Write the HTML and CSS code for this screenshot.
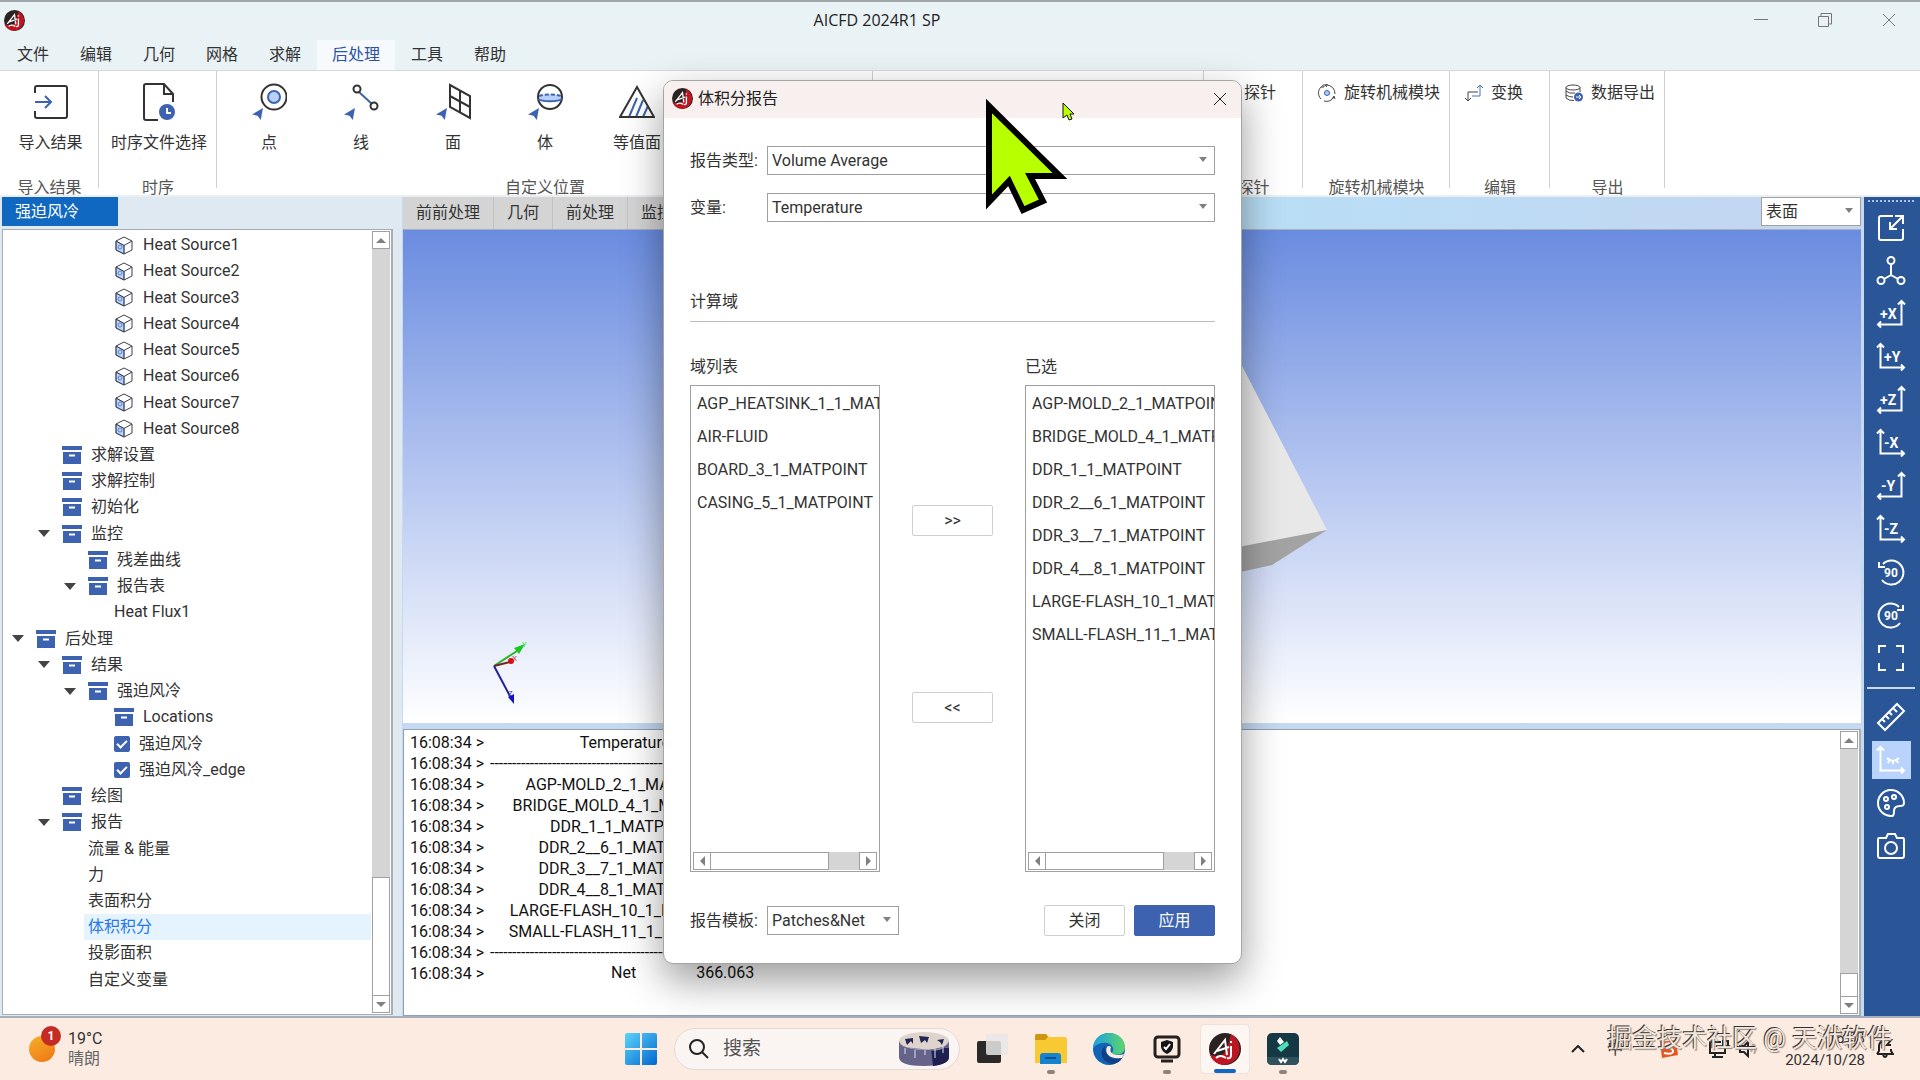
FILE: index.html
```html
<!DOCTYPE html>
<html lang="zh-CN">
<head>
    <meta charset="UTF-8">
    <meta name="viewport" content="width=device-width, initial-scale=1.0">
    <title>AICFD 2024R1 SP</title>
    <link rel="stylesheet" href="styles.css">
</head>
<body>
    <!-- Shared icons -->
    <svg class="sprite" aria-hidden="true">
        <symbol id="logo" viewBox="0 0 32 32">
            <circle cx="16" cy="16" r="16" fill="#2b2221"/>
            <path d="M22 1.5A16 16 0 0 1 10 31C5 29 2 25 1 21C8 26 18 22 19 12Z" fill="#bd1622"/>
            <path d="M5 21L16 7L18 22M8 18L20 14M22 13V22Q22 26 18 25M22 8V10M7 25Q11 21 17 25" fill="none" stroke="#fff" stroke-width="2"/>
        </symbol>
        <symbol id="box" viewBox="0 0 20 18">
            <path d="M0 0H20V4H0ZM1 6H19V18H1Z" fill="#3d62af"/>
            <path d="M7 9.500H13" stroke="#fff" stroke-width="2"/>
        </symbol>
        <symbol id="cube" viewBox="0 0 18 19">
            <path d="M1 5L9 9.500V18L1 14Z" fill="#bdd3f8" stroke="#5d82cf"/>
            <path d="M9 1L17 5V14L9 18L1 14V5ZM17 5L9 9.500L1 5M9 9.500V18" fill="none" stroke="#3c3f45"/>
            <circle cx="5" cy="11" r="2" fill="none" stroke="#5d82cf"/>
        </symbol>
        <symbol id="pick" viewBox="0 0 10 11">
            <path d="M10 0L0 6L5 7L8 11Z" fill="#3d62af"/>
        </symbol>
        <symbol id="axes-l" viewBox="0 0 30 30">
            <path d="M25.500 2V25.500H2M22 5.500L25.500 2L29 5.500M5 22.500L2 25.500L5 28.500" fill="none" stroke="currentColor" stroke-width="2"/>
        </symbol>
        <symbol id="axes-r" viewBox="0 0 30 30">
            <path d="M4.500 2V25.500H28M1 5.500L4.500 2L8 5.500M25 22.500L28 25.500L25 28.500" fill="none" stroke="currentColor" stroke-width="2"/>
        </symbol>
    </svg>

    <div class="app">
        <header class="titlebar">
            <svg class="app-logo"><use href="#logo"/></svg>
            <h1>AICFD 2024R1 SP</h1>
            <div class="window-buttons">
                <button aria-label="最小化"><svg width="14" height="14" viewBox="0 0 14 14"><path d="M0 6.500H14"/></svg></button>
                <button aria-label="还原"><svg width="14" height="14" viewBox="0 0 14 14"><path d="M.5 3.500H10.500V13.500H.5ZM3 3V.5H13.500V11H11"/></svg></button>
                <button aria-label="关闭窗口"><svg width="14" height="14" viewBox="0 0 14 14"><path d="M1 1L13 13M13 1L1 13"/></svg></button>
            </div>
        </header>

        <nav class="menu">
            <a href="#">文件</a>
            <a href="#">编辑</a>
            <a href="#">几何</a>
            <a href="#">网格</a>
            <a href="#">求解</a>
            <a href="#" class="active">后处理</a>
            <a href="#">工具</a>
            <a href="#">帮助</a>
        </nav>

        <div class="ribbon">
            <section class="group g-import">
                <div class="tools">
                    <button class="tool">
                        <svg width="36" height="36" viewBox="0 0 36 36" fill="none" stroke="#333" stroke-width="2"><path d="M2 9V4Q2 2 4 2H32Q34 2 34 4V32Q34 34 32 34H4Q2 34 2 32V27"/><path d="M2 18H18M12 12L18 18L12 24" stroke="#3d62af"/></svg>
                        <span>导入结果</span>
                    </button>
                </div>
                <h2>导入结果</h2>
            </section>
            <section class="group g-time">
                <div class="tools">
                    <button class="tool">
                        <svg width="36" height="38" viewBox="0 0 36 38" fill="none" stroke="#333" stroke-width="2"><path d="M17 37H5Q3 37 3 35V3Q3 1 5 1H23L32 11V19M23 1V11H32"/><circle cx="26" cy="29" r="8" fill="#3d62af" stroke="none"/><path d="M26 25V30H30" stroke="#fff"/></svg>
                        <span>时序文件选择</span>
                    </button>
                </div>
                <h2>时序</h2>
            </section>
            <section class="group g-place">
                <div class="tools">
                    <button class="tool">
                        <svg width="36" height="36" viewBox="0 0 36 36" fill="none"><circle cx="23" cy="13" r="12.500" stroke="#333" stroke-width="2"/><circle cx="23" cy="13" r="6" fill="#b9d1fa" stroke="#3d62af" stroke-width="2"/><use href="#pick" x="1" y="24" width="11" height="12"/></svg>
                        <span>点</span>
                    </button>
                    <button class="tool">
                        <svg width="36" height="36" viewBox="0 0 36 36" fill="none"><path d="M16 8L29 20" stroke="#3d62af" stroke-width="2"/><circle cx="14" cy="5" r="3.500" stroke="#333" stroke-width="2"/><circle cx="31" cy="22" r="3.500" stroke="#333" stroke-width="2"/><use href="#pick" x="1" y="24" width="11" height="12"/></svg>
                        <span>线</span>
                    </button>
                    <button class="tool">
                        <svg width="36" height="36" viewBox="0 0 36 36" fill="none"><path d="M15 1L35 12V34L15 23ZM25 6V28M15 12L35 23" stroke="#333" stroke-width="2"/><use href="#pick" x="1" y="24" width="11" height="12"/></svg>
                        <span>面</span>
                    </button>
                    <button class="tool">
                        <svg width="36" height="36" viewBox="0 0 36 36" fill="none"><path d="M11 13C15 9 31 9 35 13V15C31 18 15 18 11 15Z" fill="#b9d1fa"/><circle cx="23" cy="13" r="12" stroke="#333" stroke-width="2"/><path d="M11 15C15 18 31 18 35 15" stroke="#3d62af" stroke-width="2"/><path d="M12 12C17 10 29 10 34 12" stroke="#3d62af" stroke-width="2" stroke-dasharray="4 2"/><use href="#pick" x="1" y="24" width="11" height="12"/></svg>
                        <span>体</span>
                    </button>
                    <button class="tool">
                        <svg width="36" height="36" viewBox="0 0 36 36" fill="none"><path d="M10 33L18 14M17 33L24 16M24 33L29 22" stroke="#3d62af" stroke-width="2"/><path d="M18 3L35 33H1Z" stroke="#333" stroke-width="2"/></svg>
                        <span>等值面</span>
                    </button>
                </div>
                <h2>自定义位置</h2>
            </section>
            <section class="group g-hidden"></section>
            <section class="group g-probe">
                <div class="tools"><button class="tool-row"><svg width="18" height="18"></svg><span>探针</span></button></div>
                <h2>探针</h2>
            </section>
            <section class="group g-rotate">
                <div class="tools">
                    <button class="tool-row">
                        <svg width="18" height="18" viewBox="0 0 18 18" fill="none" stroke="#444"><path d="M5 1.500A8.500 8.500 0 0 0 3 15M6 17A8.500 8.500 0 0 0 16 13M17 10A8.500 8.500 0 0 0 8 1M6 0V3H3M14 15L16 12L17 15M10 0L7 1L9 3"/><circle cx="9" cy="9" r="2.500" fill="#a9ccfa" stroke="#3d62af"/></svg>
                        <span>旋转机械模块</span>
                    </button>
                </div>
                <h2>旋转机械模块</h2>
            </section>
            <section class="group g-edit">
                <div class="tools">
                    <button class="tool-row">
                        <svg width="18" height="18" viewBox="0 0 18 18" fill="none"><path d="M13 8H3V17M0 14L3 17L6 14" stroke="#444"/><path d="M7 12H15V1M12 4L15 1L18 4" stroke="#4a70c0"/></svg>
                        <span>变换</span>
                    </button>
                </div>
                <h2>编辑</h2>
            </section>
            <section class="group g-export">
                <div class="tools">
                    <button class="tool-row">
                        <svg width="18" height="18" viewBox="0 0 18 18" fill="none" stroke="#444"><ellipse cx="8" cy="3.500" rx="7" ry="2.500"/><path d="M1 3.500V14Q4 17 9 16.500M15 3.500V8M1 7Q4 10 10 9M1 11Q4 13 8 13"/><circle cx="13.500" cy="13" r="4.500" fill="#3d62af" stroke="none"/><path d="M11 13H16M14 11L16 13L14 15" stroke="#fff"/></svg>
                        <span>数据导出</span>
                    </button>
                </div>
                <h2>导出</h2>
            </section>
        </div>

        <main class="workspace">
            <aside class="explorer">
                <button class="project-tab">强迫风冷</button>
                <div class="tree-box">
                    <ul class="tree">
                        <li class="l3"><i></i><svg class="ic-cube"><use href="#cube"/></svg><span>Heat Source1</span></li>
                        <li class="l3"><i></i><svg class="ic-cube"><use href="#cube"/></svg><span>Heat Source2</span></li>
                        <li class="l3"><i></i><svg class="ic-cube"><use href="#cube"/></svg><span>Heat Source3</span></li>
                        <li class="l3"><i></i><svg class="ic-cube"><use href="#cube"/></svg><span>Heat Source4</span></li>
                        <li class="l3"><i></i><svg class="ic-cube"><use href="#cube"/></svg><span>Heat Source5</span></li>
                        <li class="l3"><i></i><svg class="ic-cube"><use href="#cube"/></svg><span>Heat Source6</span></li>
                        <li class="l3"><i></i><svg class="ic-cube"><use href="#cube"/></svg><span>Heat Source7</span></li>
                        <li class="l3"><i></i><svg class="ic-cube"><use href="#cube"/></svg><span>Heat Source8</span></li>
                        <li class="l1"><i></i><svg class="ic-box"><use href="#box"/></svg><span>求解设置</span></li>
                        <li class="l1"><i></i><svg class="ic-box"><use href="#box"/></svg><span>求解控制</span></li>
                        <li class="l1"><i></i><svg class="ic-box"><use href="#box"/></svg><span>初始化</span></li>
                        <li class="l1"><i class="open"></i><svg class="ic-box"><use href="#box"/></svg><span>监控</span></li>
                        <li class="l2"><i></i><svg class="ic-box"><use href="#box"/></svg><span>残差曲线</span></li>
                        <li class="l2"><i class="open"></i><svg class="ic-box"><use href="#box"/></svg><span>报告表</span></li>
                        <li class="l3"><i></i><span class="leaf">Heat Flux1</span></li>
                        <li class="l0"><i class="open"></i><svg class="ic-box"><use href="#box"/></svg><span>后处理</span></li>
                        <li class="l1"><i class="open"></i><svg class="ic-box"><use href="#box"/></svg><span>结果</span></li>
                        <li class="l2"><i class="open"></i><svg class="ic-box"><use href="#box"/></svg><span>强迫风冷</span></li>
                        <li class="l3"><i></i><svg class="ic-box"><use href="#box"/></svg><span>Locations</span></li>
                        <li class="l3"><i></i><input type="checkbox" id="show-body" checked><label for="show-body">强迫风冷</label></li>
                        <li class="l3"><i></i><input type="checkbox" id="show-edge" checked><label for="show-edge">强迫风冷_edge</label></li>
                        <li class="l1"><i></i><svg class="ic-box"><use href="#box"/></svg><span>绘图</span></li>
                        <li class="l1"><i class="open"></i><svg class="ic-box"><use href="#box"/></svg><span>报告</span></li>
                        <li class="l2"><i></i><span class="leaf">流量 &amp; 能量</span></li>
                        <li class="l2"><i></i><span class="leaf">力</span></li>
                        <li class="l2"><i></i><span class="leaf">表面积分</span></li>
                        <li class="l2"><i></i><span class="leaf selected">体积积分</span></li>
                        <li class="l2"><i></i><span class="leaf">投影面积</span></li>
                        <li class="l2"><i></i><span class="leaf">自定义变量</span></li>
                    </ul>
                    <div class="vscroll">
                        <button class="arrow up" aria-label="向上滚动"></button>
                        <div class="track"></div>
                        <div class="thumb tree-thumb"></div>
                        <button class="arrow down" aria-label="向下滚动"></button>
                    </div>
                </div>
            </aside>

            <div class="center">
                <div class="view-tabs">
                    <button>前前处理</button>
                    <button>几何</button>
                    <button>前处理</button>
                    <button>监控</button>
                    <div class="drop view-mode">
                        <select aria-label="显示方式"><option>表面</option></select>
                    </div>
                </div>
                <div class="viewport">
                    <svg class="model" width="300" height="300" viewBox="0 0 300 300">
                        <path d="M0 0L106 92L194 262L106 300H0Z" fill="#e8e8e8"/>
                        <path d="M194 262L139 297L80 310V284Z" fill="#a3a3a3"/>
                    </svg>
                    <svg class="triad" width="44" height="70" viewBox="0 0 44 70" fill="none">
                        <path d="M4 28L30 11" stroke="#28b52c" stroke-width="2"/><path d="M35 6L24 10L29 16Z" fill="#19c81e"/>
                        <path d="M4 28L20 24" stroke="#7b2020" stroke-width="2"/><circle cx="21" cy="23" r="3" fill="#d40f14"/>
                        <path d="M4 28L21 60" stroke="#22229c" stroke-width="2"/><path d="M24 66L18 59L24 56Z" fill="#1111c8"/>
                        <text x="32" y="9" fill="#40dc40">Y</text><text x="22" y="23" fill="#c54050">X</text><text x="18" y="58" fill="#4a4aa0">Z</text>
                    </svg>
                </div>
                <div class="log-box">
                    <table class="log">
                        <tr><th>16:08:34 &gt;</th><td>Temperature</td></tr>
                        <tr><th>16:08:34 &gt;</th><td class="rule">-------------------------------------------</td></tr>
                        <tr><th>16:08:34 &gt;</th><td>AGP-MOLD_2_1_MATPOINT</td></tr>
                        <tr><th>16:08:34 &gt;</th><td>BRIDGE_MOLD_4_1_MATPOINT</td></tr>
                        <tr><th>16:08:34 &gt;</th><td>DDR_1_1_MATPOINT</td></tr>
                        <tr><th>16:08:34 &gt;</th><td>DDR_2__6_1_MATPOINT</td></tr>
                        <tr><th>16:08:34 &gt;</th><td>DDR_3__7_1_MATPOINT</td></tr>
                        <tr><th>16:08:34 &gt;</th><td>DDR_4__8_1_MATPOINT</td></tr>
                        <tr><th>16:08:34 &gt;</th><td>LARGE-FLASH_10_1_MATPOINT</td></tr>
                        <tr><th>16:08:34 &gt;</th><td>SMALL-FLASH_11_1_MATPOINT</td></tr>
                        <tr><th>16:08:34 &gt;</th><td class="rule">-------------------------------------------</td></tr>
                        <tr><th>16:08:34 &gt;</th><td class="total"><span>Net</span><span>366.063</span></td></tr>
                    </table>
                    <div class="vscroll">
                        <button class="arrow up" aria-label="日志向上"></button>
                        <div class="track"></div>
                        <div class="thumb log-thumb"></div>
                        <button class="arrow down" aria-label="日志向下"></button>
                    </div>
                </div>
            </div>

            <aside class="view-tools">
                <div class="grip"></div>
                <button aria-label="适应窗口"><svg viewBox="0 0 30 30"><path d="M17 3H5Q3 3 3 5V25Q3 27 5 27H25Q27 27 27 25V16M14 16L27 3M19 3H27V11M14 9V16H21"/></svg></button>
                <button aria-label="等轴测"><svg viewBox="0 0 30 30"><circle cx="15" cy="4.500" r="3.500"/><circle cx="5" cy="24.500" r="3.500"/><circle cx="25" cy="24.500" r="3.500"/><path d="M15 8V19L8 23M15 19L22 23"/></svg></button>
                <button aria-label="+X"><svg viewBox="0 0 30 30"><use href="#axes-l"/><text x="4" y="20">+X</text></svg></button>
                <button aria-label="+Y"><svg viewBox="0 0 30 30"><use href="#axes-r"/><text x="8" y="20">+Y</text></svg></button>
                <button aria-label="+Z"><svg viewBox="0 0 30 30"><use href="#axes-l"/><text x="4" y="20">+Z</text></svg></button>
                <button aria-label="-X"><svg viewBox="0 0 30 30"><use href="#axes-r"/><text x="8" y="20">-X</text></svg></button>
                <button aria-label="-Y"><svg viewBox="0 0 30 30"><use href="#axes-l"/><text x="5" y="20">-Y</text></svg></button>
                <button aria-label="-Z"><svg viewBox="0 0 30 30"><use href="#axes-r"/><text x="8" y="20">-Z</text></svg></button>
                <button aria-label="逆时针旋转90度"><svg viewBox="0 0 30 30"><path d="M7 7A12 12 0 1 1 6 23M3 5V10H9"/><text class="deg" x="8" y="20">90</text></svg></button>
                <button aria-label="顺时针旋转90度"><svg viewBox="0 0 30 30"><path d="M23 7A12 12 0 1 0 24 23M27 5V10H21"/><text class="deg" x="8" y="20">90</text></svg></button>
                <button aria-label="全屏"><svg viewBox="0 0 30 30"><path d="M3 10V3H10M20 3H27V10M27 20V27H20M10 27H3V20"/></svg></button>
                <hr>
                <button aria-label="测量"><svg viewBox="0 0 30 30"><path d="M2 21L21 2L28 9L9 28ZM6 17L9 20M9 13L13 17M13 10L16 13M17 6L21 10"/></svg></button>
                <button aria-label="隐藏坐标轴" class="on"><svg viewBox="0 0 30 30"><use href="#axes-r"/><path d="M11 13Q17 19 23 13M12 18L13 16M17 19V16M22 18L21 16"/></svg></button>
                <button aria-label="颜色"><svg viewBox="0 0 30 30"><path d="M16 28A13 13 0 1 1 28 15Q28 18 24 18Q18 18 18 23Q18 28 16 28Z"/><circle cx="10" cy="11" r="2"/><circle cx="18" cy="9" r="2"/><circle cx="11" cy="19" r="2"/></svg></button>
                <button aria-label="截图"><svg viewBox="0 0 30 30"><path d="M3 7H10L12 3H19L21 7H27Q28 7 28 9V25Q28 27 26 27H4Q2 27 2 25V9Q2 7 3 7Z"/><circle cx="15" cy="17" r="6"/></svg></button>
            </aside>
        </main>

        <footer class="taskbar">
            <a href="#" class="weather">
                <span class="sun"><b>1</b></span>
                <span class="weather-text"><span>19°C</span><span>晴朗</span></span>
            </a>
            <div class="dock">
                <button aria-label="开始"><svg width="32" height="32" viewBox="0 0 32 32"><defs><linearGradient id="win" x2="1" y2="1"><stop stop-color="#5fd3fb"/><stop offset="1" stop-color="#0067cf"/></linearGradient></defs><path d="M2 0H15V15H0V2Q0 0 2 0ZM17 0H30Q32 0 32 2V15H17ZM0 17H15V32H2Q0 32 0 30ZM17 17H32V30Q32 32 30 32H17Z" fill="url(#win)"/></svg></button>
                <label class="search">
                    <svg width="20" height="20" viewBox="0 0 20 20"><circle cx="8" cy="8" r="7" fill="none" stroke="#222" stroke-width="2"/><path d="M13 13L19 19" stroke="#222" stroke-width="2"/></svg>
                    <input type="text" placeholder="搜索" aria-label="搜索">
                    <svg width="50" height="34" viewBox="0 0 50 34"><path d="M0 9V25Q0 34 25 34Q50 34 50 25V9Z" fill="#66638a"/><path d="M32 16H50V25Q50 32 34 34Z" fill="#1d2050"/><ellipse cx="25" cy="9" rx="25" ry="9" fill="#ded4cc"/><path d="M0 9A25 9 0 0 0 50 9L46 14Q42 20 30 18T4 15Z" fill="#8d86a5"/><path d="M6 7L14 6V12L12 9L8 13ZM20 4L30 5L28 11L26 8L22 11ZM38 8L45 7L43 13L41 10Z" fill="#222552"/><path d="M6 16V22M16 18V26M26 18V23M36 17V26M44 14V21" stroke="#d9e2f7"/></svg>
                </label>
                <button aria-label="任务视图"><svg width="32" height="32" viewBox="0 0 32 32"><rect y="8" width="24" height="22" rx="2" fill="#2c2a29"/><rect x="9" y="1" width="22" height="21" rx="2" fill="#e8e8e8" opacity=".85"/></svg></button>
                <button aria-label="文件资源管理器" class="running"><svg width="32" height="32" viewBox="0 0 32 32"><path d="M0 3Q0 1 2 1H11L14 4H30Q32 4 32 6V30H0Z" fill="#f8c932"/><path d="M0 3Q0 1 2 1H11L13 4L10 7H0Z" fill="#cf9413"/><path d="M5 31V23Q5 20 8 20H23Q26 20 26 23V31Z" fill="#1683ce"/><path d="M10 25H21" stroke="#0b4f91" stroke-width="2"/></svg></button>
                <button aria-label="Edge"><svg width="32" height="32" viewBox="0 0 32 32"><defs><linearGradient id="edge" x2="1"><stop stop-color="#1c9fe4"/><stop offset="1" stop-color="#5cd669"/></linearGradient></defs><circle cx="16" cy="16" r="16" fill="#1262b5"/><path d="M0 15C1 5 8 0 16 0C26 0 32 7 32 14C32 20 27 23 20 21C17 20 21 19 20 15C18 8 6 8 0 15Z" fill="url(#edge)"/><path d="M14 14C11 20 17 27 29 25L31 21Q26 23 20 21Q16 19 18 14Q16 12 14 14Z" fill="#fbebe0"/><path d="M12 13C6 18 8 29 19 31Q27 30 29 25C18 29 11 21 12 13Z" fill="#103f85"/></svg></button>
                <button aria-label="安全中心" class="running"><svg width="28" height="28" viewBox="0 0 28 28"><rect x="2" y="2" width="24" height="20" rx="3" fill="none" stroke="#24211f" stroke-width="3"/><path d="M14 5L20 7V12Q19 17 14 19Q9 17 8 12V7Z" fill="#161514"/><path d="M11 12L13 14L17 9" fill="none" stroke="#fff" stroke-width="2"/><path d="M8 26H20" stroke="#24211f" stroke-width="3"/></svg></button>
                <button aria-label="AICFD" class="current"><svg width="32" height="32"><use href="#logo"/></svg></button>
                <button aria-label="Filmora" class="running"><svg width="32" height="32" viewBox="0 0 32 32"><rect width="32" height="32" rx="5" fill="#163844"/><path d="M0 24H32V27Q32 32 27 32H5Q0 32 0 27Z" fill="#2f505d"/><path d="M13 4L17 9L13 12L10 8Z" fill="#fff"/><path d="M20 8L22 12L14 19L10 15Z" fill="#4ce0ba"/><path d="M12 26L14 29L16 26L18 29L20 26" fill="none" stroke="#fff" stroke-width="2"/></svg></button>
            </div>
            <div class="tray">
                <svg width="14" height="8" viewBox="0 0 14 8"><path d="M1 7L7 1L13 7"/></svg>
                <span class="ime">中</span>
                <svg width="20" height="20" viewBox="0 0 20 20"><path d="M1 3L17 1L19 16L3 19Z" fill="#e8551f" stroke="none"/><path d="M15 5Q5 3 6 8Q15 9 14 13Q12 16 5 14" stroke="#fff"/></svg>
                <svg class="net" width="20" height="20" viewBox="0 0 20 20"><path d="M12 14H1V3H12M6 14V18M3 18H14M14 2H19V8H14ZM16 8V14H10"/></svg>
                <svg width="20" height="18" viewBox="0 0 20 18"><path d="M1 6H5L9 2V16L5 12H1Z"/><path d="M12 6Q14 9 12 12M15 4Q18 9 15 14" stroke="#b5aca6"/></svg>
                <time><span>16:08</span><span>2024/10/28</span></time>
                <svg width="18" height="20" viewBox="0 0 18 20"><path d="M1 15L3 12V7Q3 2 9 2M15 10V12L17 15H1M7 16Q9 20 11 16M11 1H15L11 6H15"/></svg>
                <div class="watermark">掘金技术社区 @ 天洑软件</div>
            </div>
        </footer>
    </div>

    <div class="dialog" role="dialog" aria-labelledby="dialog-title">
        <div class="dialog-head">
            <svg class="app-logo"><use href="#logo"/></svg>
            <h2 id="dialog-title">体积分报告</h2>
            <button aria-label="关闭对话框"><svg width="12" height="12" viewBox="0 0 12 12"><path d="M0 0L12 12M12 0L0 12" stroke="#222" fill="none"/></svg></button>
        </div>
        <form class="dialog-body">
            <div class="field">
                <label for="report-type">报告类型:</label>
                <div class="drop"><select id="report-type"><option>Volume Average</option></select></div>
            </div>
            <div class="field">
                <label for="variable">变量:</label>
                <div class="drop"><select id="variable"><option>Temperature</option></select></div>
            </div>
            <h3>计算域</h3>
            <div class="domains">
                <div class="domain">
                    <h4>域列表</h4>
                    <div class="list-box">
                        <ul>
                            <li>AGP_HEATSINK_1_1_MATPOINT</li>
                            <li>AIR-FLUID</li>
                            <li>BOARD_3_1_MATPOINT</li>
                            <li>CASING_5_1_MATPOINT</li>
                        </ul>
                        <div class="hscroll">
                            <button type="button" class="arrow left" aria-label="向左"></button>
                            <div class="thumb"></div>
                            <div class="track"></div>
                            <button type="button" class="arrow right" aria-label="向右"></button>
                        </div>
                    </div>
                </div>
                <div class="movers">
                    <button type="button" class="btn">&gt;&gt;</button>
                    <button type="button" class="btn">&lt;&lt;</button>
                </div>
                <div class="domain">
                    <h4>已选</h4>
                    <div class="list-box">
                        <ul>
                            <li>AGP-MOLD_2_1_MATPOINT</li>
                            <li>BRIDGE_MOLD_4_1_MATPOINT</li>
                            <li>DDR_1_1_MATPOINT</li>
                            <li>DDR_2__6_1_MATPOINT</li>
                            <li>DDR_3__7_1_MATPOINT</li>
                            <li>DDR_4__8_1_MATPOINT</li>
                            <li>LARGE-FLASH_10_1_MATPOINT</li>
                            <li>SMALL-FLASH_11_1_MATPOINT</li>
                        </ul>
                        <div class="hscroll">
                            <button type="button" class="arrow left" aria-label="向左"></button>
                            <div class="thumb"></div>
                            <div class="track"></div>
                            <button type="button" class="arrow right" aria-label="向右"></button>
                        </div>
                    </div>
                </div>
            </div>
            <div class="actions">
                <label for="template">报告模板:</label>
                <div class="drop template"><select id="template"><option>Patches&amp;Net</option></select></div>
                <button type="button" class="btn">关闭</button>
                <button type="submit" class="btn primary">应用</button>
            </div>
        </form>
    </div>

    <!-- Pointers -->
    <svg class="pointer-big" width="84" height="120" viewBox="0 0 84 120"><path d="M5 10V106L25 85L39 114L59 105L46 80H76Z" fill="#b8ff00" stroke="#000" stroke-width="6"/></svg>
    <svg class="pointer" width="14" height="20" viewBox="0 0 14 20"><path d="M1 1V16L5 13L7 18L10 17L8 12H12Z" fill="#b8ff00" stroke="#111"/></svg>
</body>
</html>
```
FILE: styles.css
```css
* {
    margin: 0;
    padding: 0;
    box-sizing: border-box;
}

body {
    font-family: Roboto, "Noto Sans CJK SC", sans-serif;
    font-size: 16px;
    line-height: 20px;
    color: #333;
    overflow: hidden;
}

h1, h2, h3, h4, th {
    font-size: 16px;
    font-weight: 400;
}

button, input, select {
    font: inherit;
    color: inherit;
    background: none;
    border: none;
    border-radius: 0;
}

a {
    color: inherit;
    text-decoration: none;
}

ul {
    list-style: none;
}

.sprite {
    position: absolute;
    width: 0;
    height: 0;
}

.app {
    display: flex;
    flex-direction: column;
    height: 100vh;
    background: #e9f2f5;
}

.app-logo {
    width: 21px;
    height: 21px;
}

/* Title bar and menu */
.titlebar {
    display: grid;
    grid-template-columns: 1fr auto 1fr;
    align-items: center;
    height: 40px;
    padding: 0 4px 2px;
    border-top: 2px solid #a0a5a9;
}

.titlebar h1 {
    font-family: "Open Sans", sans-serif;
    margin-right: 166px;
    color: #222;
}

.window-buttons {
    display: flex;
    justify-content: flex-end;
    gap: 50px;
    padding-right: 20px;
}

.window-buttons button {
    display: flex;
}

.window-buttons path {
    fill: none;
    stroke: #777;
}

.menu {
    display: flex;
    gap: 1px;
    height: 30px;
    padding-left: 2px;
}

.menu a {
    padding: 0 15px;
    line-height: 30px;
}

.menu .active {
    background: #f6fafc;
    color: #2d52a8;
}

/* Ribbon */
.ribbon {
    display: flex;
    height: 127px;
    background: #fff;
    border-top: 1px solid #d3dbe0;
    border-bottom: 2px solid #eceff1;
}

.group {
    display: flex;
    flex-direction: column;
    align-items: center;
    justify-content: space-between;
    background: linear-gradient(#d0d0d0, #d0d0d0) right top / 1px 117px no-repeat;
}

.group h2 {
    color: #555;
    height: 17px;
    white-space: nowrap;
}

.g-import { width: 99px; }
.g-time { width: 118px; }
.g-place { width: 656px; }
.g-hidden { width: 331px; }
.g-probe { width: 99px; }
.g-rotate { width: 147px; }
.g-edit { width: 100px; }
.g-export { width: 115px; }

.tools {
    display: flex;
    align-self: stretch;
    padding: 12px 0 0 15px;
}

.g-import .tools, .g-time .tools {
    justify-content: center;
    padding-left: 2px;
}

.g-place .tools {
    padding-left: 6px;
}

.tool {
    display: flex;
    flex-direction: column;
    align-items: center;
    gap: 12px;
    width: 92px;
    white-space: nowrap;
}

.tool svg {
    height: 38px;
}

.g-time .tool {
    width: 112px;
}

.tool-row {
    display: flex;
    align-items: center;
    gap: 8px;
    white-space: nowrap;
}

.g-probe .tool-row {
    gap: 7px;
}

/* Project tree */
.workspace {
    display: flex;
    flex: 1;
    min-height: 0;
    border-bottom: 2px solid #a9aebb;
}

.explorer {
    display: flex;
    flex-direction: column;
    width: 402px;
    padding: 0 9px 1px 2px;
    background: #dfe9f1;
}

.project-tab {
    align-self: flex-start;
    width: 116px;
    height: 29px;
    padding-left: 13px;
    text-align: left;
    background: #1068c0;
    color: #fff;
}

.tree-box {
    display: flex;
    flex: 1;
    min-height: 0;
    margin-top: 3px;
    background: #fff;
    border: 1px solid #a8adb2;
    border-right: 2px solid #a8adb2;
}

.tree {
    display: flex;
    flex: 1;
    flex-direction: column;
    padding: 2px 0 21px;
}

.tree li {
    display: flex;
    flex: 1;
    align-items: center;
}

.tree i {
    width: 15px;
    margin-right: 11px;
}

.tree .open::before {
    content: '';
    display: block;
    width: 0;
    margin: 0 auto;
    border: 6px solid transparent;
    border-top: 7px solid #444;
    border-bottom: 0;
}

.l0 { padding-left: 7px; }
.l1 { padding-left: 33px; }
.l2 { padding-left: 59px; }
.l3 { padding-left: 85px; }

.ic-box {
    width: 20px;
    height: 18px;
    margin-right: 9px;
}

.ic-cube {
    width: 18px;
    height: 19px;
    margin: 0 10px 0 1px;
}

.tree .leaf {
    flex: 1;
    align-self: stretch;
    display: flex;
    align-items: center;
    margin-left: -4px;
    padding-left: 4px;
}

.tree .selected {
    background: #e5f3fe;
    color: #2878e8;
}

.tree input {
    appearance: none;
    width: 16px;
    height: 16px;
    margin-right: 9px;
    border-radius: 2px;
    background: #3d62af;
}

.tree input:checked::before {
    content: '';
    display: block;
    width: 8px;
    height: 4px;
    margin: 4px 0 0 3px;
    border: solid #fff;
    border-width: 0 0 2px 2px;
    transform: rotate(-45deg);
}

/* Scroll bars */
.vscroll {
    display: flex;
    flex-direction: column;
    width: 18px;
    margin: 1px;
}

.hscroll {
    display: flex;
    height: 18px;
    margin: 0 2px 1px;
}

.track {
    flex: 1;
    background: #d5d5d5;
}

.thumb, .arrow {
    background: #fff;
    border: 1px solid #a0a0a0;
}

.arrow {
    display: flex;
    align-items: center;
    justify-content: center;
    width: 18px;
    height: 18px;
}

.arrow::before {
    content: '';
    border: 5px solid transparent;
}

.up::before { border-bottom: 5px solid #808080; border-top: 0; }
.down::before { border-top: 5px solid #808080; border-bottom: 0; }
.left::before { border-right: 5px solid #808080; border-left: 0; }
.right::before { border-left: 5px solid #808080; border-right: 0; }

.tree-thumb {
    height: 118px;
    border-bottom: 0;
}

.log-thumb {
    height: 23px;
    border-bottom: 0;
}

/* Drop-downs */
.drop {
    position: relative;
    flex: 1;
}

.drop select {
    appearance: none;
    display: block;
    width: 100%;
    height: 29px;
    padding: 0 4px;
    background: #fff;
    border: 1px solid #a0a0a0;
}

.drop::after {
    content: '';
    position: absolute;
    right: 8px;
    top: 11px;
    border: 4px solid transparent;
    border-top: 5px solid #808080;
    border-bottom: 0;
    pointer-events: none;
}

/* 3D view and log */
.center {
    display: flex;
    flex: 1;
    flex-direction: column;
    min-width: 0;
    padding: 0 3px 0 1px;
    background: #c5d9f0;
}

.view-tabs {
    display: flex;
    height: 33px;
    border-bottom: 1px solid #a8b0bd;
    background: linear-gradient(90deg, #b5dff3 50%, #bcdcf6 70%, #c4d5ef);
}

.view-tabs button {
    padding: 0 13px;
    background: #d4d4d4;
    border-right: 1px solid #c2c2c2;
}

.view-tabs .view-mode {
    flex: none;
    width: 100px;
    margin-left: auto;
}

.viewport {
    position: relative;
    flex: 1;
    background: linear-gradient(#6a8ce0, #fff);
}

.model {
    position: absolute;
    left: 730px;
    top: 38px;
    overflow: visible;
}

.triad {
    position: absolute;
    left: 87px;
    top: 408px;
    font-size: 8px;
}

.log-box {
    display: flex;
    justify-content: space-between;
    height: 287px;
    margin-top: 6px;
    background: #fff;
    border: 1px solid #8fa0b8;
    border-right: 2px solid #a8adb8;
}

.log {
    display: block;
    padding: 2px 6px;
    border-spacing: 0;
    color: #111;
}

.log tr {
    height: 21px;
}

.log th {
    min-width: 80px;
    text-align: left;
    white-space: nowrap;
}

.log td {
    min-width: 270px;
    padding: 0;
    text-align: center;
    white-space: nowrap;
}

.log .rule {
    text-align: left;
}

.log .total {
    display: flex;
    gap: 60px;
    padding-left: 121px;
}

/* View tools */
.view-tools {
    display: flex;
    flex-direction: column;
    align-items: center;
    width: 56px;
    padding-right: 2px;
    background: #2a5697;
    color: #fff;
}

.grip {
    width: 46px;
    margin: 3px 0 7px;
    border-top: 2px dotted #a9c0e2;
}

.view-tools button {
    width: 39px;
    height: 38px;
    margin-bottom: 5px;
}

.view-tools svg {
    display: block;
    width: 30px;
    height: 30px;
    margin: 0 auto;
    fill: none;
    stroke: #fff;
    stroke-width: 2;
}

.view-tools text {
    fill: #fff;
    stroke: none;
    font: 700 14px Roboto, sans-serif;
}

.view-tools .deg {
    font-size: 12px;
}

.view-tools .on {
    background: #b9d3fc;
}

.view-tools hr {
    width: 48px;
    margin: 5px 0 9px;
    border: none;
    border-top: 2px solid #c8daf2;
}

/* Taskbar */
.taskbar {
    display: grid;
    grid-template-columns: 1fr auto 1fr;
    height: 62px;
    background: #fbebe1;
}

.weather {
    display: flex;
    align-items: center;
    gap: 13px;
    padding-left: 29px;
}

.sun {
    position: relative;
    width: 26px;
    height: 26px;
    border-radius: 50%;
    background: linear-gradient(150deg, #f6b02a, #ef7513);
}

.sun b {
    position: absolute;
    left: 12px;
    top: -10px;
    width: 20px;
    height: 20px;
    border-radius: 50%;
    background: #c42b22;
    color: #fff;
    font-size: 12px;
    text-align: center;
}

.weather-text {
    display: flex;
    flex-direction: column;
    color: #333;
}

.weather-text span + span {
    color: #666;
}

.dock {
    display: flex;
    align-items: center;
    gap: 8px;
    padding-left: 4px;
}

.dock button {
    position: relative;
    display: flex;
    align-items: center;
    justify-content: center;
    width: 50px;
    height: 50px;
}

.dock .current {
    background: #fdf6f2;
    border: 1px solid #f0e2da;
    border-radius: 5px;
}

.running::after, .current::after {
    content: '';
    position: absolute;
    bottom: 0;
    left: 50%;
    width: 8px;
    height: 4px;
    margin-left: -4px;
    border-radius: 2px;
    background: #8d837d;
}

.current::after {
    width: 22px;
    margin-left: -11px;
    background: #1068c4;
}

.search {
    display: flex;
    align-items: center;
    gap: 14px;
    width: 286px;
    height: 42px;
    padding: 0 10px 0 14px;
    border: 1px solid #e6dad4;
    border-radius: 21px;
    background: #faf5f2;
}

.search input {
    flex: 1;
    min-width: 0;
    font-size: 19px;
    line-height: 24px;
}

.search input::placeholder {
    color: #555;
}

.tray {
    position: relative;
    display: flex;
    align-items: center;
    justify-content: flex-end;
    gap: 10px;
    padding-right: 26px;
}

.tray > svg {
    fill: none;
    stroke: #222;
    stroke-width: 2;
}

.tray > svg:first-child {
    margin-right: 12px;
}

.ime {
    margin-right: 26px;
}

.net {
    margin-left: 20px;
}

.tray time {
    display: flex;
    flex-direction: column;
    text-align: right;
    margin: 0 1px 0 16px;
    line-height: 22px;
    font-size: 15px;
}

.watermark {
    position: absolute;
    right: 28px;
    top: 5px;
    font-size: 25px;
    line-height: 32px;
    white-space: nowrap;
    color: #f3e6dd;
    text-shadow: -1px -1px 0 #333, 1px 1px 1px #8a807a;
}

/* Report dialog */
.dialog {
    position: absolute;
    left: 663px;
    top: 80px;
    width: 579px;
    background: #fff;
    border: 1px solid #a5a5a5;
    border-radius: 10px;
    box-shadow: 0 16px 40px rgba(0, 0, 0, 0.4);
    overflow: hidden;
}

.dialog-head {
    display: flex;
    align-items: center;
    height: 37px;
    padding: 0 15px 2px 8px;
    background: #f7f0ee;
    color: #222;
}

.dialog-head h2 {
    flex: 1;
    padding-left: 5px;
}

.dialog-head button {
    display: flex;
}

.dialog-body {
    padding: 28px 26px 27px;
}

.field {
    display: flex;
    align-items: center;
    margin-bottom: 18px;
}

.field label, .actions label {
    width: 77px;
}

.dialog h3 {
    margin-top: 70px;
    padding-bottom: 9px;
    border-bottom: 1px solid #bdbdbd;
}

.domains {
    display: flex;
    justify-content: space-between;
    margin: 35px 0 33px;
}

.domain {
    width: 190px;
}

.domain h4 {
    margin-bottom: 8px;
}

.list-box {
    display: flex;
    flex-direction: column;
    height: 487px;
    border: 1px solid #a0a0a0;
}

.list-box ul {
    flex: 1;
    padding: 1px 0 0 6px;
    overflow: hidden;
    white-space: nowrap;
}

.list-box li {
    line-height: 33px;
}

.hscroll .thumb {
    width: 118px;
    border-left: 0;
}

.movers {
    display: flex;
    flex-direction: column;
    gap: 156px;
    padding-top: 148px;
}

.btn {
    width: 81px;
    height: 31px;
    background: #fff;
    border: 1px solid #cfcfcf;
    border-radius: 2px;
}

.primary {
    background: #3d62b0;
    border-color: #3d62b0;
    color: #fff;
}

.actions {
    display: flex;
    align-items: center;
    gap: 9px;
}

.actions label {
    margin-right: -9px;
}

.actions .template {
    flex: none;
    width: 132px;
    margin-right: auto;
}

.pointer-big, .pointer {
    position: absolute;
    pointer-events: none;
}

.pointer-big {
    left: 984px;
    top: 96px;
}

.pointer {
    left: 1062px;
    top: 102px;
}
```
